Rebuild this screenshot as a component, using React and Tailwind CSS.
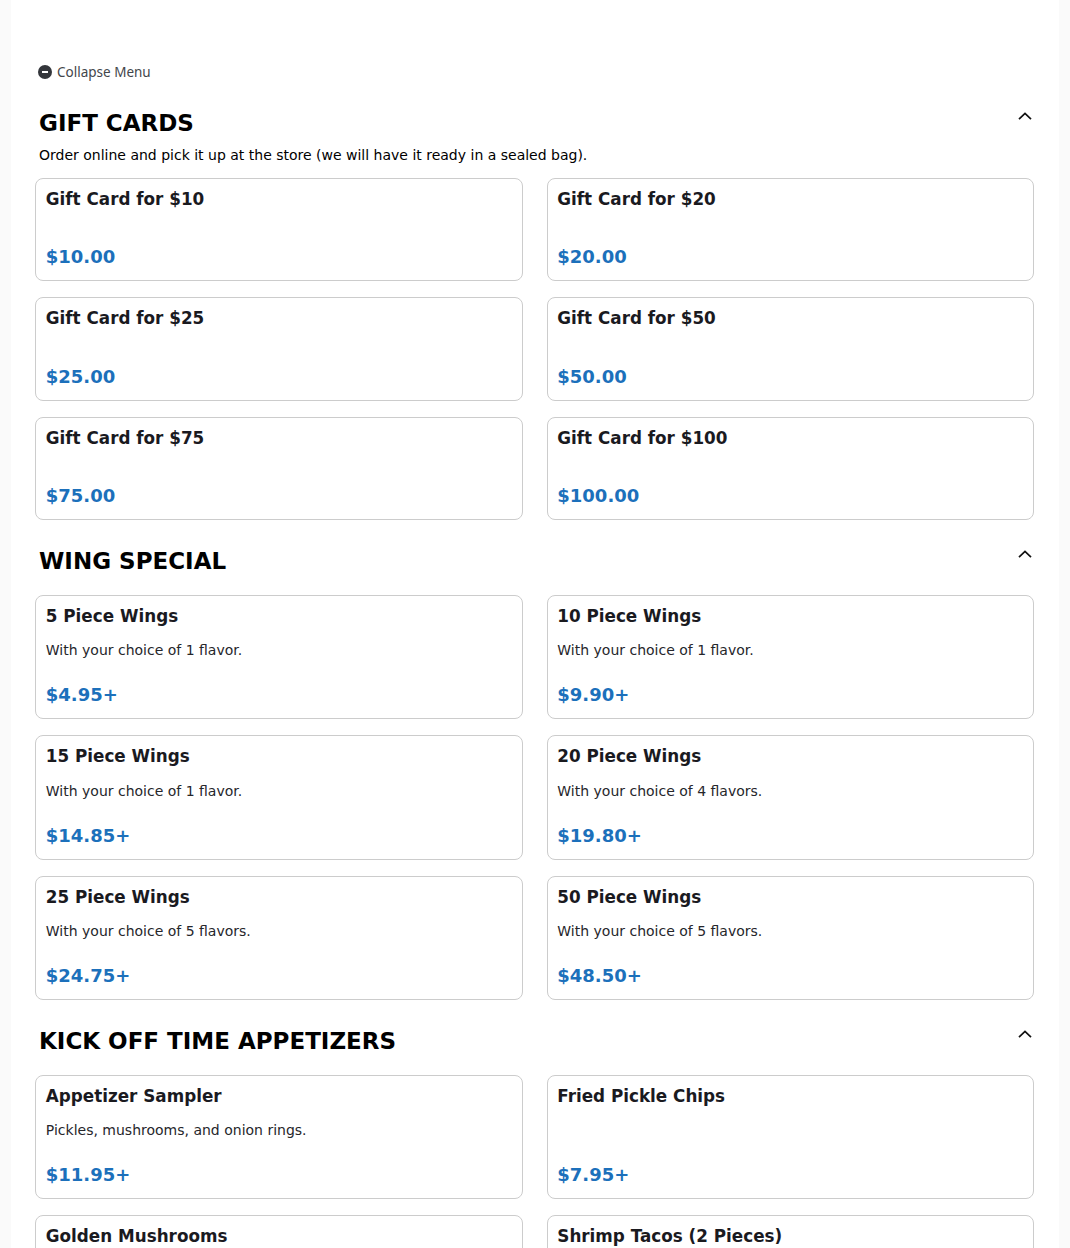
import React from "react";

function Card({ title, desc, price, compact }) {
  return (
    <div className={`min-w-0 border border-[#cccccc] rounded-[8px] bg-white pt-[8px] px-[9.8px] pb-[10px] flex flex-col ${compact ? "h-[103.4px]" : "h-[124.5px]"}`}>
      <div className="text-[16.8px] leading-[24px] font-bold text-[#1a1a1f]">{title}</div>
      {compact ? null : (
        <div className="mt-[10.4px] h-[24px] text-[14px] leading-[24px] text-[#26262b]">{desc}</div>
      )}
      <div className="mt-auto text-[18px] leading-[26px] font-bold text-[#1c70bb]">{price}</div>
    </div>
  );
}

function Chevron() {
  return (
    <svg width="14" height="14" viewBox="0 0 14 14" fill="none" className="mt-[3.5px] mr-[2px] shrink-0">
      <path d="M1 10.2 L7 4.4 L13 10.2" stroke="#111" strokeWidth="1.7" />
    </svg>
  );
}

function Section({ title, sub, items, className, compact }) {
  return (
    <section className={className}>
      <div className="flex justify-between items-start pl-[4px] h-[36px]">
        <h2 className="text-[23px] leading-[36px] font-bold text-black">{title}</h2>
        <Chevron />
      </div>
      {sub ? (
        <p className="pl-[4px] mt-[2px] text-[14px] leading-[24px] text-black">{sub}</p>
      ) : null}
      <div className={`grid grid-cols-2 gap-x-[24px] gap-y-[16px] ${sub ? "mt-[11px]" : "mt-[15.6px]"}`}>
        {items.map((it) => (
          <Card key={it.title} compact={compact} {...it} />
        ))}
      </div>
    </section>
  );
}

const gift = [
  ["Gift Card for $10", "$10.00"],
  ["Gift Card for $20", "$20.00"],
  ["Gift Card for $25", "$25.00"],
  ["Gift Card for $50", "$50.00"],
  ["Gift Card for $75", "$75.00"],
  ["Gift Card for $100", "$100.00"],
].map(([title, price]) => ({ title, price }));

const wings = [
  ["5 Piece Wings", "With your choice of 1 flavor.", "$4.95+"],
  ["10 Piece Wings", "With your choice of 1 flavor.", "$9.90+"],
  ["15 Piece Wings", "With your choice of 1 flavor.", "$14.85+"],
  ["20 Piece Wings", "With your choice of 4 flavors.", "$19.80+"],
  ["25 Piece Wings", "With your choice of 5 flavors.", "$24.75+"],
  ["50 Piece Wings", "With your choice of 5 flavors.", "$48.50+"],
].map(([title, desc, price]) => ({ title, desc, price }));

const apps = [
  ["Appetizer Sampler", "Pickles, mushrooms, and onion rings.", "$11.95+"],
  ["Fried Pickle Chips", "", "$7.95+"],
  ["Golden Mushrooms", "", "$7.95+"],
  ["Shrimp Tacos (2 Pieces)", "", "$8.95+"],
].map(([title, desc, price]) => ({ title, desc, price }));

export default function App() {
  return (
    <div className="h-[1248px] overflow-hidden bg-[#fafafa] font-['DejaVu_Sans',sans-serif]">
      <main className="mx-[11px] h-full bg-white pl-[24px] pr-[25px] pt-[62px]">
        <div className="flex items-center gap-[5px] pl-[3px] h-[20px]">
          <span className="flex h-[14px] w-[14px] items-center justify-center rounded-full bg-[#33363b]">
            <span className="h-[2px] w-[6px] bg-white" />
          </span>
          <span className="font-['Noto_Sans',sans-serif] text-[13.5px] leading-[20px] text-[#43464b]">Collapse Menu</span>
        </div>
        <Section className="mt-[23px]" compact title="GIFT CARDS" sub="Order online and pick it up at the store (we will have it ready in a sealed bag)." items={gift} />
        <Section className="mt-[23px]" title="WING SPECIAL" items={wings} />
        <Section className="mt-[23px]" title="KICK OFF TIME APPETIZERS" items={apps} />
      </main>
    </div>
  );
}
